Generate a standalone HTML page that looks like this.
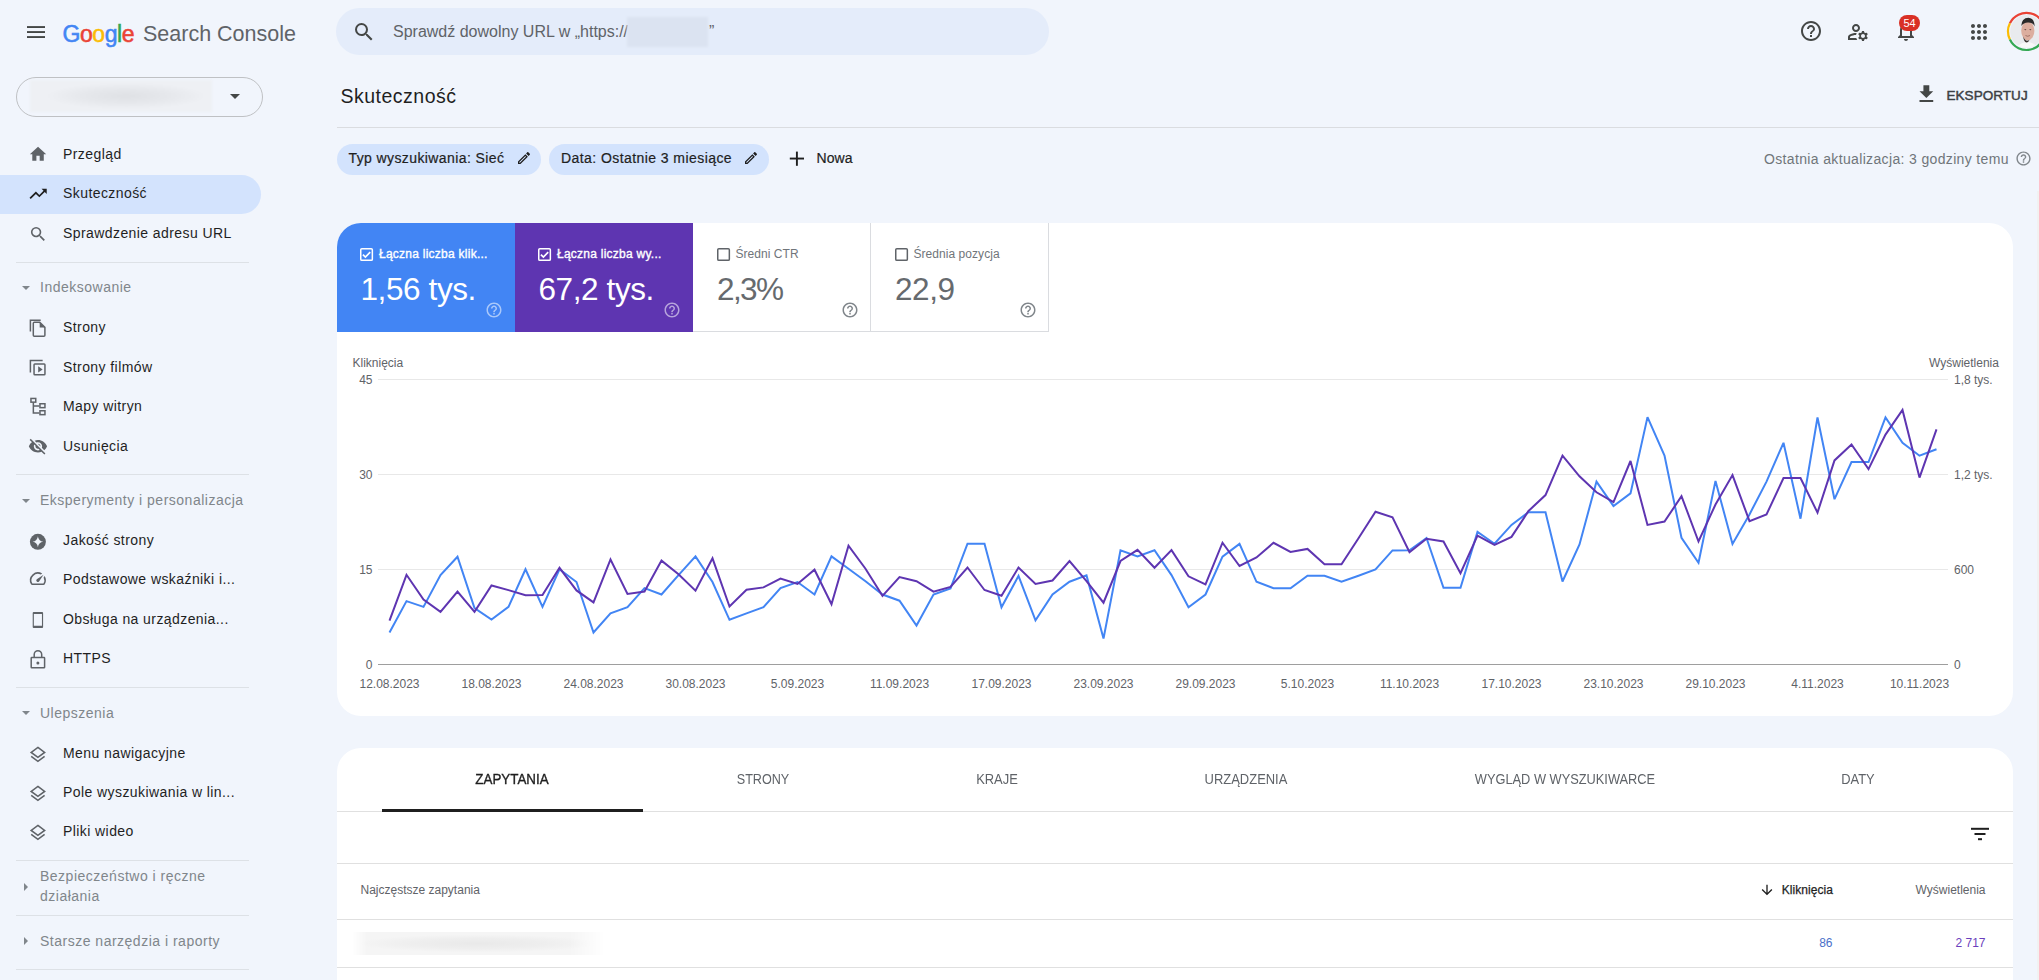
<!DOCTYPE html>
<html><head><meta charset="utf-8">
<style>
*{box-sizing:border-box;margin:0;padding:0}
html,body{width:2039px;height:980px;overflow:hidden;background:#f1f5fc;font-family:"Liberation Sans",sans-serif;color:#1f1f1f}
.a{position:absolute;white-space:nowrap}
svg{position:absolute;overflow:visible}
.nav{position:absolute;white-space:nowrap;font-size:14px;color:#1f1f1f;left:63px;letter-spacing:0.42px;line-height:16px}
.sec{position:absolute;white-space:nowrap;font-size:14px;color:#80868b;left:40px;letter-spacing:0.5px;line-height:16px}
.dv{position:absolute;left:16px;width:233px;height:1px;background:#dde1e6}
.tri{position:absolute;left:22px;width:0;height:0;border-left:4.5px solid transparent;border-right:4.5px solid transparent;border-top:4.5px solid #80868b}
.trr{position:absolute;left:24px;width:0;height:0;border-top:4.5px solid transparent;border-bottom:4.5px solid transparent;border-left:4.5px solid #80868b}
.tab{position:absolute;white-space:nowrap;font-size:14px;color:#5f6368;top:771px;line-height:16px}
.xl{position:absolute;white-space:nowrap;font-size:12px;color:#5f6368;top:677px;line-height:14px}
.yl{position:absolute;white-space:nowrap;font-size:12px;color:#5f6368;line-height:14px}
.gr{position:absolute;left:378px;width:1570px;height:1px;background:#e8e8e8}
.mlab{position:absolute;white-space:nowrap;font-size:12px;line-height:14px}
.mval{position:absolute;white-space:nowrap;font-size:31.5px;line-height:36px;letter-spacing:-0.4px}
</style></head><body>
<!-- TOP BAR -->
<svg style="left:0;top:0" width="60" height="60">
  <rect x="27" y="26.1" width="18" height="1.9" fill="#444746"/>
  <rect x="27" y="31.1" width="18" height="1.9" fill="#444746"/>
  <rect x="27" y="36.1" width="18" height="1.9" fill="#444746"/>
</svg>
<div class="a" style="left:62.5px;top:21px;font-size:23px;letter-spacing:-0.45px;line-height:26px;-webkit-text-stroke:0.55px currentColor"><span style="color:#4285f4;-webkit-text-stroke:0.55px #4285f4">G</span><span style="color:#ea4335">o</span><span style="color:#fbbc05">o</span><span style="color:#4285f4">g</span><span style="color:#34a853">l</span><span style="color:#ea4335">e</span></div>
<div class="a" style="left:143px;top:22px;font-size:21.5px;color:#5f6368;line-height:24px">Search Console</div>

<div class="a" style="left:336px;top:8px;width:713px;height:47px;border-radius:24px;background:#e4ecfa"></div>
<svg style="left:352px;top:20px" width="24" height="24" viewBox="0 0 24 24"><path fill="#444746" d="M15.5 14h-.79l-.28-.27A6.471 6.471 0 0 0 16 9.5 6.5 6.5 0 1 0 9.5 16c1.61 0 3.09-.59 4.23-1.57l.27.28v.79l5 4.99L20.49 19l-4.99-5zm-6 0C7.01 14 5 11.99 5 9.5S7.01 5 9.5 5 14 7.01 14 9.5 11.99 14 9.5 14z"/></svg>
<div class="a" style="left:393px;top:23px;font-size:16px;color:#5f6368;line-height:18px">Sprawdź dowolny URL w „https://</div>
<div class="a" style="left:627px;top:17px;width:81px;height:30px;background:#dbe3f1;filter:blur(1px)"></div>
<div class="a" style="left:709px;top:23px;font-size:16px;color:#5f6368;line-height:18px">”</div>

<!-- right icons -->
<svg style="left:1799px;top:19px" width="24" height="24" viewBox="0 0 24 24"><path fill="#444746" d="M11 18h2v-2h-2v2zm1-16C6.48 2 2 6.48 2 12s4.48 10 10 10 10-4.48 10-10S17.52 2 12 2zm0 18c-4.41 0-8-3.59-8-8s3.59-8 8-8 8 3.59 8 8-3.59 8-8 8zm0-14c-2.21 0-4 1.79-4 4h2c0-1.1.9-2 2-2s2 .9 2 2c0 2-3 1.75-3 5h2c0-2.25 3-2.5 3-5 0-2.21-1.79-4-4-4z"/></svg>
<svg style="left:1846px;top:20px" width="24" height="24" viewBox="0 0 24 24"><path fill="#444746" d="M4 18v-.65c0-.34.16-.66.41-.81C6.1 15.53 8.03 15 10 15c.03 0 .05 0 .08.01.1-.7.3-1.37.59-1.98-.22-.02-.44-.03-.67-.03-2.42 0-4.68.67-6.61 1.82-.88.52-1.39 1.5-1.39 2.53V20h9.26c-.42-.6-.75-1.28-.97-2H4zM10 12c2.21 0 4-1.79 4-4s-1.79-4-4-4-4 1.79-4 4 1.79 4 4 4zm0-6c1.1 0 2 .9 2 2s-.9 2-2 2-2-.9-2-2 .9-2 2-2zM20.75 16c0-.22-.03-.42-.06-.63l1.14-1.01-1-1.73-1.45.49c-.32-.27-.68-.48-1.08-.63L18 11h-2l-.3 1.49c-.4.15-.76.36-1.08.63l-1.45-.49-1 1.73 1.14 1.01c-.03.21-.06.41-.06.63s.03.42.06.63l-1.14 1.01 1 1.73 1.45-.49c.32.27.68.48 1.08.63L16 21h2l.3-1.49c.4-.15.76-.36 1.08-.63l1.45.49 1-1.73-1.14-1.01c.03-.21.06-.41.06-.63zM17 18c-1.1 0-2-.9-2-2s.9-2 2-2 2 .9 2 2-.9 2-2 2z"/></svg>
<svg style="left:1894px;top:19px" width="24" height="24" viewBox="0 0 24 24"><path fill="#444746" d="M12 22c1.1 0 2-.9 2-2h-4c0 1.1.89 2 2 2zm6-6v-5c0-3.07-1.64-5.64-4.5-6.32V4c0-.83-.67-1.5-1.5-1.5s-1.5.67-1.5 1.5v.68C7.63 5.36 6 7.92 6 11v5l-2 2v1h16v-1l-2-2zm-2 1H8v-6c0-2.48 1.51-4.5 4-4.5s4 2.02 4 4.5v6z"/></svg>
<div class="a" style="left:1899px;top:15px;width:21px;height:16px;border-radius:8px;background:#d93025;color:#fff;font-size:11px;line-height:16px;text-align:center">54</div>
<svg style="left:1967px;top:20px" width="24" height="24" viewBox="0 0 24 24"><path fill="#444746" d="M6 8c1.1 0 2-.9 2-2s-.9-2-2-2-2 .9-2 2 .9 2 2 2zm6 12c1.1 0 2-.9 2-2s-.9-2-2-2-2 .9-2 2 .9 2 2 2zm-6 0c1.1 0 2-.9 2-2s-.9-2-2-2-2 .9-2 2 .9 2 2 2zm0-6c1.1 0 2-.9 2-2s-.9-2-2-2-2 .9-2 2 .9 2 2 2zm6 0c1.1 0 2-.9 2-2s-.9-2-2-2-2 .9-2 2 .9 2 2 2zm4-8c0 1.1.9 2 2 2s2-.9 2-2-.9-2-2-2-2 .9-2 2zm-4 2c1.1 0 2-.9 2-2s-.9-2-2-2-2 .9-2 2 .9 2 2 2zm6 6c1.1 0 2-.9 2-2s-.9-2-2-2-2 .9-2 2 .9 2 2 2zm0 6c1.1 0 2-.9 2-2s-.9-2-2-2-2 .9-2 2 .9 2 2 2z"/></svg>
<svg style="left:2005px;top:11px" width="42" height="42" viewBox="0 0 42 42">
  <defs><clipPath id="av"><circle cx="21.5" cy="20.4" r="16.3"/></clipPath></defs>
  <path d="M4.9 12.3 A18.4 18.4 0 0 1 39.9 20.4" stroke="#ea4335" stroke-width="2.2" fill="none"/>
  <path d="M4.9 12.3 A18.4 18.4 0 0 0 4.9 28.5" stroke="#fbbc04" stroke-width="2.2" fill="none"/>
  <path d="M4.9 28.5 A18.4 18.4 0 0 0 39.9 20.4" stroke="#34a853" stroke-width="2.2" fill="none"/>
  <circle cx="21.5" cy="20.4" r="16.3" fill="#e9ebee"/>
  <g clip-path="url(#av)">
    <path d="M8 42 Q14 31 22 31 Q31 31 36 42z" fill="#f8f8f8"/>
    <ellipse cx="22.8" cy="19.8" rx="6.6" ry="9.4" fill="#dcae9f"/>
    <path d="M16.2 15 Q16.5 7 23.5 6.8 Q29.5 7.2 29.6 15.5 Q28 11.2 23 11.4 Q18.5 11.6 16.2 15z" fill="#2a2a2a"/>
    <path d="M18.2 25.5 Q20.5 31.5 24.5 28.8 Q23.5 31.5 21.5 31.6 Q18.8 30.8 18.2 25.5z" fill="#3a3330"/>
    <ellipse cx="20.3" cy="18.6" rx="1" ry="0.55" fill="#6a5048"/>
    <ellipse cx="25.3" cy="18.6" rx="1" ry="0.55" fill="#6a5048"/>
    <path d="M20.5 24.5 Q22.8 26 25 24.5" stroke="#8a5a50" stroke-width="0.7" fill="none"/>
  </g>
</svg>
<!-- SIDEBAR -->
<div class="a" style="left:16px;top:77px;width:247px;height:40px;border-radius:20px;border:1px solid #bfc1c4"></div>
<div class="a" style="left:30px;top:80px;width:182px;height:32px;background:radial-gradient(ellipse 80px 13px at 96px 16px,#dfe1e5 0%,#e6e8ec 55%,#eef0f4 100%);filter:blur(1px)"></div>
<div class="a" style="left:230px;top:94px;width:0;height:0;border-left:5px solid transparent;border-right:5px solid transparent;border-top:5px solid #444746"></div>
<div class="a" style="left:0;top:175px;width:261px;height:39px;border-radius:0 20px 20px 0;background:#d3e3fd"></div>
<svg style="left:26px;top:143.0px" width="24" height="24" viewBox="0 0 24 24"><path fill="#5f6368" d="M10 20v-6h4v6h5v-8h3L12 3 2 12h3v8z" transform="translate(2.2,1.3) scale(0.82)"/></svg>
<div class="nav" style="top:146.15px">Przegląd</div>
<svg style="left:26px;top:182.3px" width="24" height="24" viewBox="0 0 24 24"><path fill="#1f1f1f" d="M16 6l2.29 2.29-4.88 4.88-4-4L2 16.59 3.41 18l6-6 4 4 6.3-6.29L22 12V6z" transform="translate(1.8,1.6) scale(0.86)"/></svg>
<div class="nav" style="top:185.45px">Skuteczność</div>
<svg style="left:26px;top:221.6px" width="24" height="24" viewBox="0 0 24 24"><path fill="#5f6368" d="M15.5 14h-.79l-.28-.27A6.471 6.471 0 0 0 16 9.5 6.5 6.5 0 1 0 9.5 16c1.61 0 3.09-.59 4.23-1.57l.27.28v.79l5 4.99L20.49 19l-4.99-5zm-6 0C7.010 14 5 11.99 5 9.5S7.01 5 9.5 5 14 7.01 14 9.5 11.99 14 9.5 14z" transform="translate(2.5,2.5) scale(0.8)"/></svg>
<div class="nav" style="top:224.75px">Sprawdzenie adresu URL</div>
<div class="dv" style="top:262px"></div>
<div class="tri" style="top:285.5px"></div>
<div class="sec" style="top:278.95px">Indeksowanie</div>
<svg style="left:26px;top:315.8px" width="24" height="24" viewBox="0 0 24 24"><g fill="none" stroke="#5f6368" stroke-width="1.5"><path d="M4.4 15.6V4.3H14.7"/><path d="M8.3 6.2H13.7L18.9 11.4V19.3Q18.9 20.3 17.9 20.3H8.3Q7.3 20.3 7.3 19.3V7.2Q7.3 6.2 8.3 6.2z"/></g><path fill="#5f6368" d="M13.7 6.2V11.5H18.9z"/></svg>
<div class="nav" style="top:318.95px">Strony</div>
<svg style="left:26px;top:356.0px" width="24" height="24" viewBox="0 0 24 24"><g fill="none" stroke="#5f6368" stroke-width="1.5"><path d="M4.4 16.4V4.4H16.65"/><rect x="8.05" y="7.95" width="10.9" height="10.9" rx="0.8"/></g><path fill="#5f6368" d="M12.2 10.3L16.65 13.45L12.2 16.6z"/></svg>
<div class="nav" style="top:359.15px">Strony filmów</div>
<svg style="left:26px;top:395.3px" width="24" height="24" viewBox="0 0 24 24"><g fill="none" stroke="#5f6368" stroke-width="1.5"><rect x="4.95" y="3.45" width="4.8" height="3.7"/><path d="M7.35 7.2V18.05H13.2M7.35 11.1H13.2"/><rect x="13.95" y="8.75" width="5" height="3.9"/><rect x="13.95" y="15.75" width="5" height="3.9"/></g></svg>
<div class="nav" style="top:398.45px">Mapy witryn</div>
<svg style="left:26px;top:435.0px" width="24" height="24" viewBox="0 0 24 24"><path fill="#5f6368" transform="translate(2.0,1.35) scale(0.83)" d="M12 7c2.76 0 5 2.24 5 5 0 .65-.13 1.26-.36 1.83l2.92 2.92c1.51-1.26 2.7-2.89 3.43-4.75-1.73-4.39-6-7.5-11-7.5-1.4 0-2.74.25-3.98.7l2.16 2.16C10.74 7.13 11.35 7 12 7zM2 4.27l2.28 2.28.46.46C3.08 8.3 1.78 10.02 1 12c1.73 4.39 6 7.5 11 7.5 1.550 0 3.03-.3 4.38-.84l.42.42L19.73 22 21 20.73 3.27 3 2 4.27zM7.53 9.8l1.55 1.55c-.05.21-.08.43-.08.65 0 1.66 1.34 3 3 3 .22 0 .44-.03.65-.08l1.55 1.55c-.67.33-1.41.53-2.2.53-2.76 0-5-2.24-5-5 0-.79.2-1.53.53-2.2zm4.31-.78l3.15 3.15.02-.16c0-1.66-1.34-3-3-3l-.17.01z"/></svg>
<div class="nav" style="top:438.15px">Usunięcia</div>
<div class="dv" style="top:474px"></div>
<div class="tri" style="top:498.8px"></div>
<div class="sec" style="top:492.25px">Eksperymenty i personalizacja</div>
<svg style="left:26px;top:528.9px" width="24" height="24" viewBox="0 0 24 24"><circle cx="11.9" cy="12.8" r="8" fill="#5f6368"/><path fill="#f1f5fc" d="M11.9 7.3Q12.5 12.2 17.2 12.8Q12.5 13.4 11.9 18.3Q11.3 13.4 6.6 12.8Q11.3 12.2 11.9 7.3z"/></svg>
<div class="nav" style="top:532.05px">Jakość strony</div>
<svg style="left:26px;top:568.0px" width="24" height="24" viewBox="0 0 24 24"><path fill="#5f6368" transform="translate(2.3,1.1) scale(0.8)" d="M20.38 8.57l-1.23 1.85a8 8 0 0 1-.22 7.58H5.07A8 8 0 0 1 15.58 6.85l1.85-1.23A10 10 0 0 0 3.35 19a2 2 0 0 0 1.72 1h13.85a2 2 0 0 0 1.74-1 10 10 0 0 0-.27-10.44zm-9.79 6.84a2 2 0 0 0 2.830 0l5.66-8.49-8.49 5.66a2 2 0 0 0 0 2.83z"/></svg>
<div class="nav" style="top:571.15px">Podstawowe wskaźniki i...</div>
<svg style="left:26px;top:607.9px" width="24" height="24" viewBox="0 0 24 24"><path fill="#5f6368" fill-rule="evenodd" d="M7.7 3.9H16.1Q17.1 3.9 17.1 4.9V18.9Q17.1 19.9 16.1 19.9H7.7Q6.7 19.9 6.7 18.9V4.9Q6.7 3.9 7.7 3.9zM7.85 6.1V17.7H15.95V6.1z"/></svg>
<div class="nav" style="top:611.05px">Obsługa na urządzenia...</div>
<svg style="left:26px;top:647.3px" width="24" height="24" viewBox="0 0 24 24"><g fill="none" stroke="#5f6368" stroke-width="1.5"><path d="M8.2 10.5V7.4A3.75 3.75 0 0 1 15.7 7.4V10.5"/><rect x="5.2" y="10.6" width="13.4" height="10.2" rx="0.6"/></g><circle cx="11.9" cy="15.9" r="1.5" fill="#5f6368"/></svg>
<div class="nav" style="top:650.45px">HTTPS</div>
<div class="dv" style="top:687px"></div>
<div class="tri" style="top:711.2px"></div>
<div class="sec" style="top:704.65px">Ulepszenia</div>
<svg style="left:26px;top:741.8px" width="24" height="24" viewBox="0 0 24 24"><g fill="none" stroke="#5f6368" stroke-width="1.6" stroke-linejoin="miter"><path d="M11.9 5.4L18.6 10.4L11.9 15.3L5.2 10.4z"/><path d="M5.2 14.4L11.9 19.3L18.6 14.4"/></g></svg>
<div class="nav" style="top:744.95px">Menu nawigacyjne</div>
<svg style="left:26px;top:781.0px" width="24" height="24" viewBox="0 0 24 24"><g fill="none" stroke="#5f6368" stroke-width="1.6" stroke-linejoin="miter"><path d="M11.9 5.4L18.6 10.4L11.9 15.3L5.2 10.4z"/><path d="M5.2 14.4L11.9 19.3L18.6 14.4"/></g></svg>
<div class="nav" style="top:784.15px">Pole wyszukiwania w lin...</div>
<svg style="left:26px;top:820.2px" width="24" height="24" viewBox="0 0 24 24"><g fill="none" stroke="#5f6368" stroke-width="1.6" stroke-linejoin="miter"><path d="M11.9 5.4L18.6 10.4L11.9 15.3L5.2 10.4z"/><path d="M5.2 14.4L11.9 19.3L18.6 14.4"/></g></svg>
<div class="nav" style="top:823.35px">Pliki wideo</div>
<div class="dv" style="top:860px"></div>
<div class="trr" style="top:882.5px"></div>
<div class="sec" style="top:867.75px">Bezpieczeństwo i ręczne</div>
<div class="sec" style="top:887.65px">działania</div>
<div class="dv" style="top:915px"></div>
<div class="trr" style="top:937.4px"></div>
<div class="sec" style="top:932.55px">Starsze narzędzia i raporty</div>
<div class="dv" style="top:969px"></div>
<!-- MAIN HEADER -->
<div class="a" style="left:340.5px;top:85px;font-size:19.5px;line-height:22px;letter-spacing:0.5px;color:#1f1f1f">Skuteczność</div>
<svg style="left:1914px;top:81.5px" width="24" height="24" viewBox="0 0 24 24"><path fill="#444746" d="M19 9h-4V3H9v6H5l7 7 7-7zM5 18v2h14v-2H5z" transform="translate(0.6,0.4) scale(0.98)"/></svg>
<div class="a" style="left:1946.5px;top:88px;font-size:13.5px;line-height:15px;font-weight:400;color:#3c4043;letter-spacing:0.05px;-webkit-text-stroke:0.45px #3c4043">EKSPORTUJ</div>
<div class="a" style="left:337px;top:127px;width:1702px;height:1px;background:#dadce0"></div>
<div class="a" style="left:337px;top:144px;width:204px;height:31px;border-radius:15.5px;background:#d3e3fd"></div>
<div class="a" style="left:348.5px;top:150px;font-size:14px;line-height:16px;letter-spacing:0.4px;color:#1f1f1f;-webkit-text-stroke:0.2px #1f1f1f">Typ wyszukiwania: Sieć</div>
<svg style="left:515.5px;top:150px" width="16" height="16" viewBox="0 0 24 24"><path fill="#1f1f1f" d="M3 17.25V21h3.75L17.81 9.94l-3.75-3.75L3 17.25zM5.92 19H5v-.92l9.06-9.06.92.92L5.92 19zM20.71 5.63l-2.34-2.34c-.2-.2-.45-.29-.71-.29s-.51.1-.7.29l-1.83 1.83 3.75 3.75 1.83-1.83c.39-.39.39-1.02 0-1.41z"/></svg>
<div class="a" style="left:549px;top:144px;width:220px;height:31px;border-radius:15.5px;background:#d3e3fd"></div>
<div class="a" style="left:561px;top:150px;font-size:14px;line-height:16px;letter-spacing:0.43px;color:#1f1f1f;-webkit-text-stroke:0.2px #1f1f1f">Data: Ostatnie 3 miesiące</div>
<svg style="left:743px;top:150px" width="16" height="16" viewBox="0 0 24 24"><path fill="#1f1f1f" d="M3 17.25V21h3.75L17.81 9.94l-3.75-3.75L3 17.25zM5.92 19H5v-.92l9.06-9.06.92.92L5.92 19zM20.71 5.63l-2.34-2.34c-.2-.2-.45-.29-.71-.29s-.51.1-.7.29l-1.83 1.83 3.75 3.75 1.83-1.83c.39-.39.39-1.02 0-1.41z"/></svg>
<svg style="left:789px;top:150.5px" width="16" height="16"><rect x="0.8" y="6.6" width="14.2" height="1.9" fill="#1f1f1f"/><rect x="6.95" y="0.6" width="1.9" height="14.2" fill="#1f1f1f"/></svg>
<div class="a" style="left:816.5px;top:150px;font-size:14px;line-height:16px;color:#1f1f1f;letter-spacing:0.1px;-webkit-text-stroke:0.2px #1f1f1f">Nowa</div>
<div class="a" style="left:1764px;top:151px;font-size:14px;line-height:16px;letter-spacing:0.35px;color:#70757a">Ostatnia aktualizacja: 3 godziny temu</div>
<svg style="left:2014.5px;top:149.5px" width="17" height="17" viewBox="0 0 24 24"><path fill="#80868b" d="M11 18h2v-2h-2v2zm1-16C6.48 2 2 6.48 2 12s4.48 10 10 10 10-4.48 10-10S17.52 2 12 2zm0 18c-4.41 0-8-3.590-8-8s3.59-8 8-8 8 3.59 8 8-3.59 8-8 8zm0-14c-2.21 0-4 1.79-4 4h2c0-1.1.9-2 2-2s2 .9 2 2c0 2-3 1.75-3 5h2c0-2.25 3-2.5 3-5 0-2.21-1.79-4-4-4z"/></svg>
<!-- CARD -->
<div class="a" style="left:337px;top:223px;width:1676px;height:493px;border-radius:24px;background:#fff"></div>
<div class="a" style="left:337px;top:223px;width:178px;height:108.5px;border-radius:24px 0 0 0;background:#4285f4"></div>
<div class="a" style="left:515px;top:223px;width:178px;height:108.5px;background:#5e35b1"></div>
<div class="a" style="left:693px;top:223px;width:178px;height:109px;border-right:1px solid #dadce0;border-bottom:1px solid #dadce0"></div>
<div class="a" style="left:871px;top:223px;width:178px;height:109px;border-right:1px solid #dadce0;border-bottom:1px solid #dadce0"></div>
<svg style="left:360px;top:247.5px" width="14" height="14"><rect x="0.75" y="0.75" width="11.6" height="11.6" rx="1.1" fill="none" stroke="#fff" stroke-width="1.5"/><path d="M2.9 6.6L5.4 9.1L10.2 4.1" fill="none" stroke="#fff" stroke-width="1.7"/></svg>
<div class="mlab" style="left:379px;top:246.5px;color:#fff;font-weight:400;letter-spacing:0.25px;-webkit-text-stroke:0.35px #fff">Łączna liczba klik...</div>
<div class="mval" style="left:360.5px;top:270.5px;color:#fff">1,56 tys.</div>
<svg style="left:484.5px;top:301px" width="18" height="18" viewBox="0 0 24 24"><path fill="rgba(255,255,255,0.55)" d="M11 18h2v-2h-2v2zm1-16C6.48 2 2 6.48 2 12s4.48 10 10 10 10-4.48 10-10S17.52 2 12 2zm0 18c-4.41 0-8-3.590-8-8s3.59-8 8-8 8 3.59 8 8-3.59 8-8 8zm0-14c-2.21 0-4 1.79-4 4h2c0-1.1.9-2 2-2s2 .9 2 2c0 2-3 1.75-3 5h2c0-2.25 3-2.5 3-5 0-2.21-1.79-4-4-4z"/></svg>
<svg style="left:538px;top:247.5px" width="14" height="14"><rect x="0.75" y="0.75" width="11.6" height="11.6" rx="1.1" fill="none" stroke="#fff" stroke-width="1.5"/><path d="M2.9 6.6L5.4 9.1L10.2 4.1" fill="none" stroke="#fff" stroke-width="1.7"/></svg>
<div class="mlab" style="left:557px;top:246.5px;color:#fff;font-weight:400;letter-spacing:0.25px;-webkit-text-stroke:0.35px #fff">Łączna liczba wy...</div>
<div class="mval" style="left:538.5px;top:270.5px;color:#fff">67,2 tys.</div>
<svg style="left:662.5px;top:301px" width="18" height="18" viewBox="0 0 24 24"><path fill="rgba(255,255,255,0.55)" d="M11 18h2v-2h-2v2zm1-16C6.48 2 2 6.48 2 12s4.48 10 10 10 10-4.48 10-10S17.52 2 12 2zm0 18c-4.41 0-8-3.590-8-8s3.59-8 8-8 8 3.59 8 8-3.59 8-8 8zm0-14c-2.21 0-4 1.79-4 4h2c0-1.1.9-2 2-2s2 .9 2 2c0 2-3 1.75-3 5h2c0-2.25 3-2.5 3-5 0-2.21-1.79-4-4-4z"/></svg>
<svg style="left:716.5px;top:247.5px" width="14" height="14"><rect x="0.75" y="0.75" width="11.6" height="11.6" rx="1.1" fill="none" stroke="#5f6368" stroke-width="1.5"/></svg>
<div class="mlab" style="left:735.5px;top:246.5px;color:#70757a;letter-spacing:0.05px">Średni CTR</div>
<div class="mval" style="left:717.0px;top:270.5px;color:#666a6e;letter-spacing:-1.6px">2,3%</div>
<svg style="left:841.0px;top:301px" width="18" height="18" viewBox="0 0 24 24"><path fill="#80868b" d="M11 18h2v-2h-2v2zm1-16C6.48 2 2 6.48 2 12s4.48 10 10 10 10-4.48 10-10S17.52 2 12 2zm0 18c-4.41 0-8-3.590-8-8s3.59-8 8-8 8 3.59 8 8-3.59 8-8 8zm0-14c-2.21 0-4 1.79-4 4h2c0-1.1.9-2 2-2s2 .9 2 2c0 2-3 1.75-3 5h2c0-2.25 3-2.5 3-5 0-2.21-1.79-4-4-4z"/></svg>
<svg style="left:894.5px;top:247.5px" width="14" height="14"><rect x="0.75" y="0.75" width="11.6" height="11.6" rx="1.1" fill="none" stroke="#5f6368" stroke-width="1.5"/></svg>
<div class="mlab" style="left:913.5px;top:246.5px;color:#70757a;letter-spacing:0.05px">Średnia pozycja</div>
<div class="mval" style="left:895.0px;top:270.5px;color:#666a6e">22,9</div>
<svg style="left:1019.0px;top:301px" width="18" height="18" viewBox="0 0 24 24"><path fill="#80868b" d="M11 18h2v-2h-2v2zm1-16C6.48 2 2 6.48 2 12s4.48 10 10 10 10-4.48 10-10S17.52 2 12 2zm0 18c-4.41 0-8-3.590-8-8s3.59-8 8-8 8 3.59 8 8-3.59 8-8 8zm0-14c-2.21 0-4 1.79-4 4h2c0-1.1.9-2 2-2s2 .9 2 2c0 2-3 1.75-3 5h2c0-2.25 3-2.5 3-5 0-2.21-1.79-4-4-4z"/></svg>
<!-- CHART -->
<div class="yl" style="left:352.5px;top:355.8px;color:#5f6368">Kliknięcia</div>
<div class="yl" style="left:1929px;top:355.8px;color:#5f6368">Wyświetlenia</div>
<div class="gr" style="top:378.7px"></div>
<div class="yl" style="right:1666.5px;top:372.9px">45</div>
<div class="yl" style="left:1954px;top:372.9px">1,8 tys.</div>
<div class="gr" style="top:473.7px"></div>
<div class="yl" style="right:1666.5px;top:467.9px">30</div>
<div class="yl" style="left:1954px;top:467.9px">1,2 tys.</div>
<div class="gr" style="top:568.7px"></div>
<div class="yl" style="right:1666.5px;top:562.9px">15</div>
<div class="yl" style="left:1954px;top:562.9px">600</div>
<div class="a" style="left:378px;top:663.9px;width:1570px;height:1px;background:#9e9e9e"></div>
<div class="yl" style="right:1666.5px;top:658.1px">0</div>
<div class="yl" style="left:1954px;top:658.1px">0</div>
<div class="xl" style="left:329.5px;width:120px;text-align:center;top:676.5px">12.08.2023</div>
<div class="xl" style="left:431.5px;width:120px;text-align:center;top:676.5px">18.08.2023</div>
<div class="xl" style="left:533.5px;width:120px;text-align:center;top:676.5px">24.08.2023</div>
<div class="xl" style="left:635.5px;width:120px;text-align:center;top:676.5px">30.08.2023</div>
<div class="xl" style="left:737.5px;width:120px;text-align:center;top:676.5px">5.09.2023</div>
<div class="xl" style="left:839.5px;width:120px;text-align:center;top:676.5px">11.09.2023</div>
<div class="xl" style="left:941.5px;width:120px;text-align:center;top:676.5px">17.09.2023</div>
<div class="xl" style="left:1043.5px;width:120px;text-align:center;top:676.5px">23.09.2023</div>
<div class="xl" style="left:1145.5px;width:120px;text-align:center;top:676.5px">29.09.2023</div>
<div class="xl" style="left:1247.5px;width:120px;text-align:center;top:676.5px">5.10.2023</div>
<div class="xl" style="left:1349.5px;width:120px;text-align:center;top:676.5px">11.10.2023</div>
<div class="xl" style="left:1451.5px;width:120px;text-align:center;top:676.5px">17.10.2023</div>
<div class="xl" style="left:1553.5px;width:120px;text-align:center;top:676.5px">23.10.2023</div>
<div class="xl" style="left:1655.5px;width:120px;text-align:center;top:676.5px">29.10.2023</div>
<div class="xl" style="left:1757.5px;width:120px;text-align:center;top:676.5px">4.11.2023</div>
<div class="xl" style="left:1859.5px;width:120px;text-align:center;top:676.5px">10.11.2023</div>
<svg style="left:0;top:0" width="2039" height="980"><polyline points="389.5,632.5 406.5,601.1 423.5,606.9 440.5,575.1 457.5,556.7 474.5,608.0 491.5,619.5 508.5,606.9 525.5,569.3 542.5,606.9 559.5,569.3 576.5,582.0 593.5,632.5 610.5,613.4 627.5,607.2 644.5,588.1 661.5,594.5 678.5,575.1 695.5,556.4 712.5,582.0 729.5,619.8 746.5,613.4 763.5,607.2 780.5,588.1 797.5,582.0 814.5,594.5 831.5,556.4 848.5,568.8 865.5,581.2 882.5,594.5 899.5,600.7 916.5,625.6 933.5,594.5 950.5,588.4 967.5,543.7 984.5,543.7 1001.5,607.2 1018.5,575.9 1035.5,620.3 1052.5,594.5 1069.5,581.7 1086.5,575.4 1103.5,638.6 1120.5,550.3 1137.5,556.4 1154.5,550.3 1171.5,575.1 1188.5,607.2 1205.5,594.5 1222.5,556.7 1239.5,543.9 1256.5,581.8 1273.5,588.2 1290.5,588.2 1307.5,575.7 1324.5,575.7 1341.5,581.8 1358.5,575.7 1375.5,569.5 1392.5,550.4 1409.5,550.3 1426.5,538.0 1443.5,587.8 1460.5,587.8 1477.5,531.9 1494.5,543.7 1511.5,524.9 1528.5,512.2 1545.5,512.2 1562.5,581.5 1579.5,544.4 1596.5,481.6 1613.5,506.1 1630.5,493.4 1647.5,417.1 1664.5,455.6 1681.5,537.8 1698.5,562.7 1715.5,481.0 1732.5,543.9 1749.5,514.4 1766.5,481.6 1783.5,442.8 1800.5,518.7 1817.5,417.5 1834.5,499.2 1851.5,462.1 1868.5,462.1 1885.5,417.5 1902.5,442.8 1919.5,455.7 1936.5,449.2" fill="none" stroke="#4285f4" stroke-width="2" stroke-linejoin="miter" stroke-miterlimit="3"/><polyline points="389.5,620.7 406.5,574.8 423.5,599.6 440.5,611.8 457.5,591.6 474.5,611.8 491.5,585.5 508.5,590.1 525.5,595.3 542.5,595.0 559.5,567.8 576.5,590.4 593.5,602.4 610.5,559.5 627.5,593.9 644.5,591.6 661.5,560.6 678.5,574.3 695.5,590.7 712.5,558.3 729.5,606.5 746.5,589.7 763.5,587.4 780.5,578.6 797.5,584.0 814.5,569.7 831.5,604.2 848.5,545.6 865.5,568.7 882.5,595.8 899.5,577.1 916.5,581.2 933.5,591.6 950.5,586.9 967.5,567.5 984.5,590.0 1001.5,595.8 1018.5,567.5 1035.5,584.0 1052.5,580.5 1069.5,561.0 1086.5,581.2 1103.5,602.7 1120.5,561.0 1137.5,549.8 1154.5,567.8 1171.5,550.1 1188.5,576.3 1205.5,584.3 1222.5,542.7 1239.5,566.0 1256.5,557.4 1273.5,542.8 1290.5,551.9 1307.5,548.9 1324.5,564.2 1341.5,564.2 1358.5,538.2 1375.5,511.8 1392.5,517.2 1409.5,552.2 1426.5,538.7 1443.5,541.5 1460.5,573.2 1477.5,535.7 1494.5,544.8 1511.5,536.9 1528.5,511.0 1545.5,495.1 1562.5,455.6 1579.5,476.3 1596.5,492.3 1613.5,502.1 1630.5,461.0 1647.5,524.9 1664.5,521.6 1681.5,496.2 1698.5,541.5 1715.5,504.5 1732.5,475.1 1749.5,521.2 1766.5,514.5 1783.5,478.0 1800.5,478.0 1817.5,512.6 1834.5,460.4 1851.5,444.5 1868.5,469.1 1885.5,434.6 1902.5,410.0 1919.5,477.6 1936.5,429.4" fill="none" stroke="#5e35b1" stroke-width="2" stroke-linejoin="miter" stroke-miterlimit="3"/></svg>
<!-- TABLE -->
<div class="a" style="left:337px;top:748px;width:1676px;height:260px;border-radius:24px;background:#fff"></div>
<div class="tab" style="left:362.20000000000005px;width:300px;text-align:center;top:771px;color:#1f1f1f;transform:scaleX(0.955);-webkit-text-stroke:0.35px #1f1f1f">ZAPYTANIA</div>
<div class="tab" style="left:612.7px;width:300px;text-align:center;top:771px;color:#5f6368;transform:scaleX(0.9)">STRONY</div>
<div class="tab" style="left:847.1px;width:300px;text-align:center;top:771px;color:#5f6368;transform:scaleX(0.925)">KRAJE</div>
<div class="tab" style="left:1096px;width:300px;text-align:center;top:771px;color:#5f6368;transform:scaleX(0.925)">URZĄDZENIA</div>
<div class="tab" style="left:1414.6px;width:300px;text-align:center;top:771px;color:#5f6368;transform:scaleX(0.915)">WYGLĄD W WYSZUKIWARCE</div>
<div class="tab" style="left:1708.2px;width:300px;text-align:center;top:771px;color:#5f6368;transform:scaleX(0.92)">DATY</div>
<div class="a" style="left:337px;top:811px;width:1676px;height:1px;background:#e0e0e0"></div>
<div class="a" style="left:382px;top:808.5px;width:261px;height:3px;background:#1f1f1f"></div>
<svg style="left:1968px;top:822px" width="24" height="24"><rect x="3" y="5.8" width="18" height="2" fill="#1f1f1f"/><rect x="6.5" y="11" width="11" height="2" fill="#1f1f1f"/><rect x="10" y="16.2" width="4" height="2" fill="#1f1f1f"/></svg>
<div class="a" style="left:337px;top:863px;width:1676px;height:1px;background:#e0e0e0"></div>
<div class="yl" style="left:360.5px;top:883px;color:#5f6368">Najczęstsze zapytania</div>
<svg style="left:1759px;top:882px" width="16" height="16" viewBox="0 0 24 24"><path fill="#1f1f1f" d="M20 12l-1.41-1.41L13 16.17V4h-2v12.17l-5.58-5.59L4 12l8 8 8-8z"/></svg>
<div class="yl" style="right:206px;top:883.3px;color:#1f1f1f;font-weight:400;letter-spacing:0.05px;-webkit-text-stroke:0.25px #1f1f1f">Kliknięcia</div>
<div class="yl" style="right:53.5px;top:883.3px;color:#5f6368">Wyświetlenia</div>
<div class="a" style="left:337px;top:919px;width:1676px;height:1px;background:#e0e0e0"></div>
<div class="a" style="left:352px;top:932px;width:253px;height:23px;background:radial-gradient(ellipse 120px 9px at 126px 11.5px,#e9e9e9 0%,#eeeeee 55%,#f5f5f5 100%);filter:blur(0.6px);-webkit-mask-image:linear-gradient(to right,transparent 0%,#000 6%,#000 86%,transparent 100%)"></div>
<div class="yl" style="right:206.5px;top:936px;color:#4a70c9">86</div>
<div class="yl" style="right:53.5px;top:936px;color:#6b3fbd">2 717</div>
<div class="a" style="left:337px;top:967px;width:1676px;height:1px;background:#e0e0e0"></div>
<div class="a" style="left:2037px;top:191px;width:2px;height:789px;background:#f1f1f1"></div>
</body></html>
